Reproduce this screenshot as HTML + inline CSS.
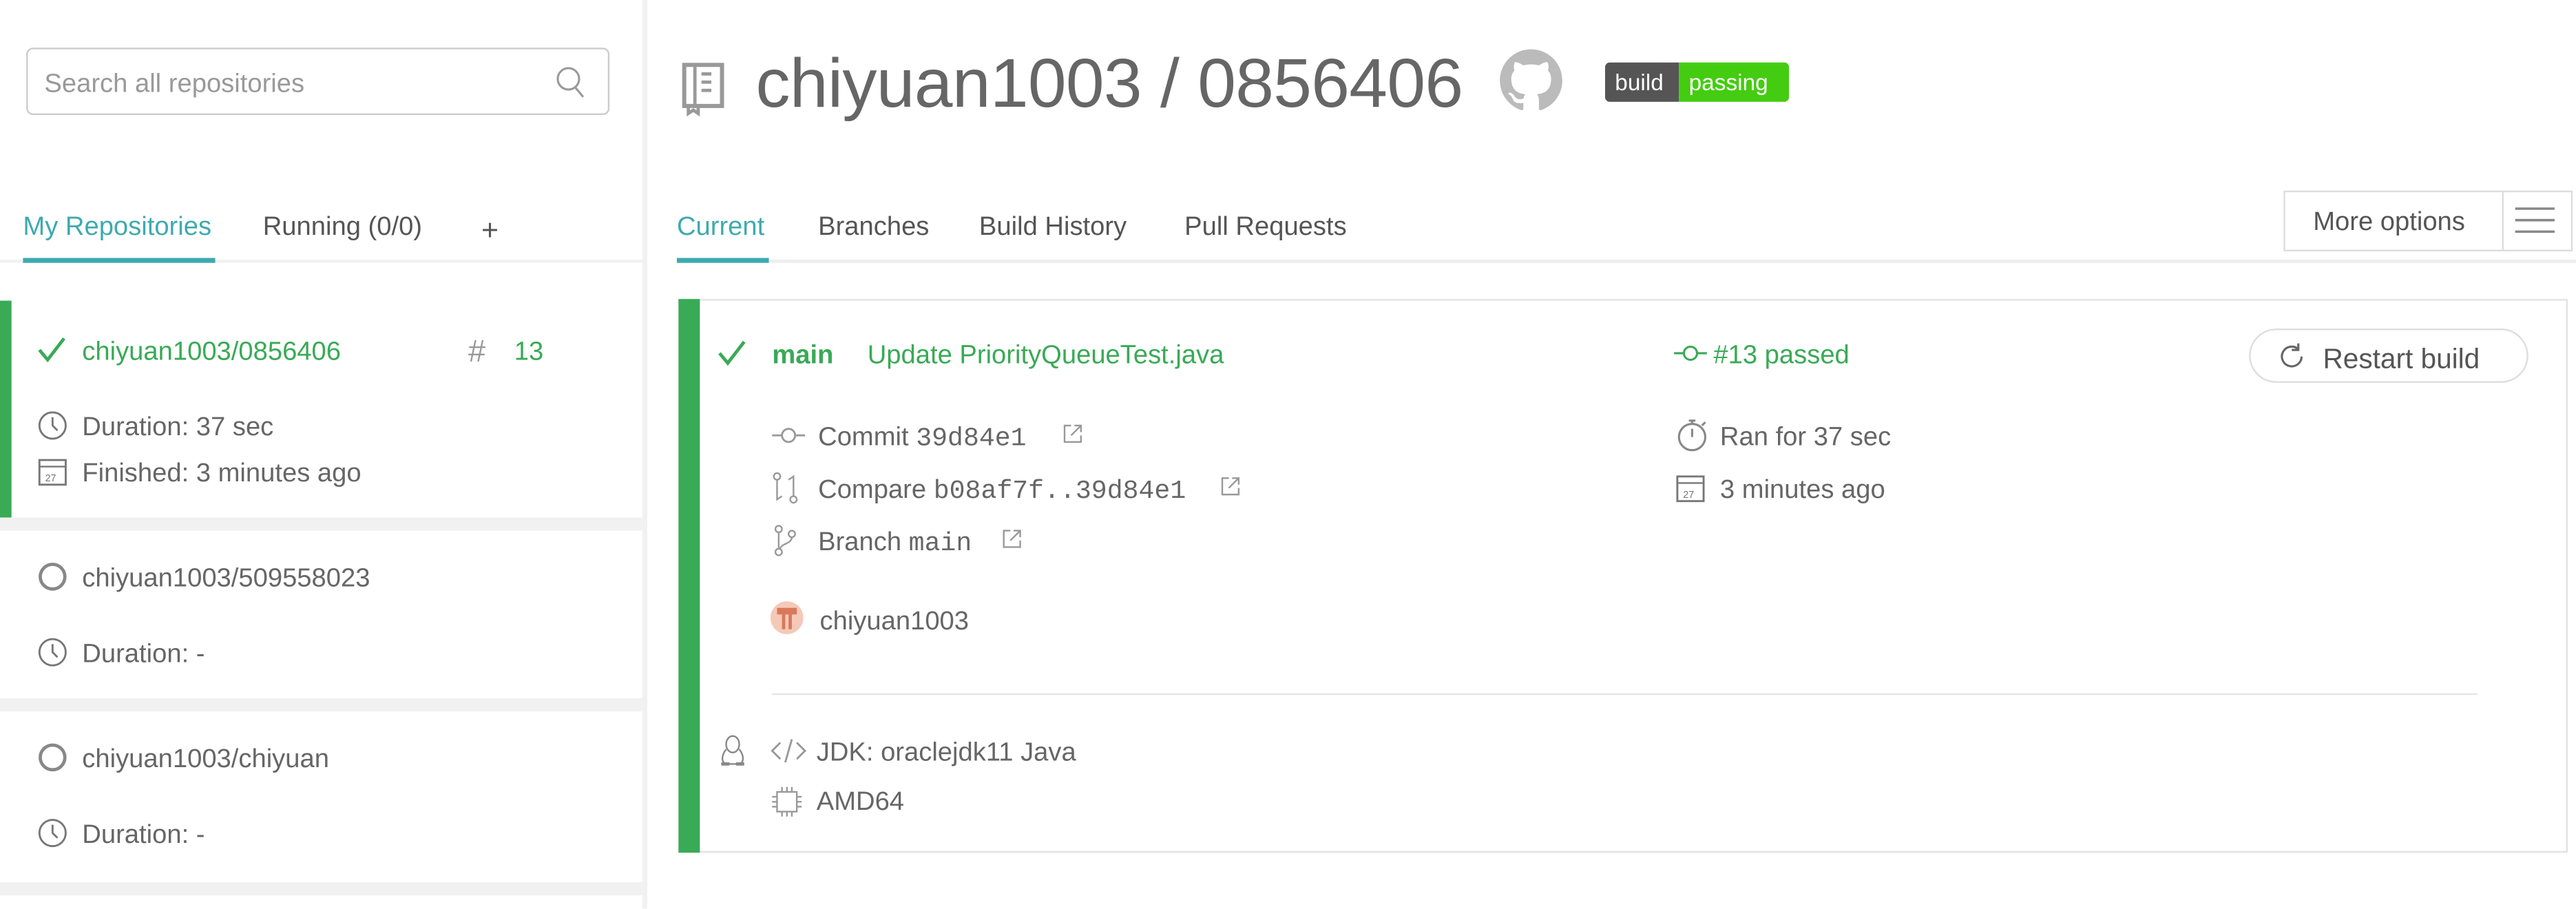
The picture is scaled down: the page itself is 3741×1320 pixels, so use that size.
<!DOCTYPE html>
<html><head><meta charset="utf-8"><style>
*{margin:0;padding:0;box-sizing:border-box}
html,body{width:3741px;height:1320px;overflow:hidden;background:#fff}
#w{position:absolute;left:0;top:0;width:1568px;height:553px;transform:scale(2.3858);transform-origin:0 0;font-family:"Liberation Sans",sans-serif;color:#666;font-size:16px}
.a{position:absolute;white-space:nowrap}
.x{margin-top:2px}
.g{color:#39aa56}
.t{color:#3eaaaf}
.m{font-family:"Liberation Mono",monospace;font-size:16px}
svg{position:absolute;overflow:visible}
.band{position:absolute;left:0;width:391px;background:#f1f1f1}
</style></head><body><div id="w">
<!-- sidebar -->
<div class="a" style="left:391px;top:0;width:3px;height:553px;background:#f1f1f1"></div>
<div class="a" style="left:16px;top:29px;width:355px;height:41px;border:1px solid #ccc;border-radius:4px"></div>
<div class="a x" style="left:27px;top:41px;color:#999">Search all repositories</div>
<svg style="left:338px;top:40px" width="20" height="20"><circle cx="8" cy="8" r="6.5" fill="none" stroke="#999" stroke-width="1.3"/><path d="M12 13l5 6" stroke="#999" stroke-width="1.3"/></svg>
<div class="a t x" style="left:14px;top:128px">My Repositories</div>
<div class="a x" style="left:160px;top:128px;color:#555">Running (0/0)</div>
<div class="a x" style="left:293px;top:128px;color:#555;font-size:18px">+</div>
<div class="a" style="left:0;top:158px;width:391px;height:2px;background:#f1f1f1"></div>
<div class="a" style="left:14px;top:157px;width:117px;height:3px;background:#3eaaaf"></div>

<div class="a" style="left:0;top:183px;width:7px;height:132px;background:#39aa56"></div>
<svg style="left:22px;top:204px" width="20" height="18"><path d="M2 9l5 6L17 2" fill="none" stroke="#39aa56" stroke-width="2"/></svg>
<div class="a g x" style="left:50px;top:204px">chiyuan1003/0856406</div>
<div class="a x" style="left:285px;top:202px;color:#999;font-size:19px">#</div>
<div class="a g x" style="left:313px;top:204px">13</div>
<svg style="left:23px;top:250px" width="18" height="18"><circle cx="9" cy="9" r="8" fill="none" stroke="#777" stroke-width="1.2"/><path d="M9 4v5l3 3" fill="none" stroke="#777" stroke-width="1.2"/></svg>
<div class="a x" style="left:50px;top:250px">Duration: 37 sec</div>
<svg style="left:23px;top:278px" width="18" height="18"><rect x="1" y="2" width="16" height="15" fill="none" stroke="#777" stroke-width="1.2"/><path d="M1 6h16" stroke="#777"/><text x="4.5" y="15" font-size="6" fill="#777" font-family="Liberation Sans">27</text></svg>
<div class="a x" style="left:50px;top:278px">Finished: 3 minutes ago</div>
<div class="band" style="top:315px;height:8px"></div>
<svg style="left:23px;top:342px" width="18" height="18"><circle cx="9" cy="9" r="7.5" fill="none" stroke="#888" stroke-width="2"/></svg>
<div class="a x" style="left:50px;top:342px">chiyuan1003/509558023</div>
<svg style="left:23px;top:388px" width="18" height="18"><circle cx="9" cy="9" r="8" fill="none" stroke="#777" stroke-width="1.2"/><path d="M9 4v5l3 3" fill="none" stroke="#777" stroke-width="1.2"/></svg>
<div class="a x" style="left:50px;top:388px">Duration: -</div>
<div class="band" style="top:425px;height:8px"></div>
<svg style="left:23px;top:452px" width="18" height="18"><circle cx="9" cy="9" r="7.5" fill="none" stroke="#888" stroke-width="2"/></svg>
<div class="a x" style="left:50px;top:452px">chiyuan1003/chiyuan</div>
<svg style="left:23px;top:498px" width="18" height="18"><circle cx="9" cy="9" r="8" fill="none" stroke="#777" stroke-width="1.2"/><path d="M9 4v5l3 3" fill="none" stroke="#777" stroke-width="1.2"/></svg>
<div class="a x" style="left:50px;top:498px">Duration: -</div>
<div class="band" style="top:537px;height:8px"></div>

<!-- header -->
<svg style="left:415px;top:38px" width="26" height="32"><rect x="1.5" y="1.5" width="23" height="25" fill="none" stroke="#999" stroke-width="2.5"/><path d="M8 1v25M12 7h6M12 12h6M12 17h6M4 27v4l3-2 3 2v-4" fill="none" stroke="#999" stroke-width="2"/></svg>
<div class="a" style="left:460px;top:27px;font-size:42px;color:#666;letter-spacing:-0.3px">chiyuan1003 / 0856406</div>
<svg style="left:913px;top:30px" width="38" height="38" viewBox="0 0 16 16"><path fill="#bbb" d="M8 0C3.580 0 0 3.58 0 8c0 3.54 2.29 6.53 5.47 7.59.4.07.55-.17.55-.38 0-.19-.01-.82-.01-1.49-2.010.37-2.53-.49-2.69-.94-.09-.23-.48-.94-.82-1.13-.28-.15-.68-.52-.01-.53.63-.01 1.08.58 1.23.82.72 1.21 1.87.87 2.33.66.07-.52.28-.87.51-1.070-1.78-.2-3.64-.89-3.64-3.95 0-.87.31-1.59.82-2.15-.08-.2-.36-1.02.08-2.12 0 0 .67-.21 2.2.82.64-.18 1.32-.27 2-.27.68 0 1.36.09 2 .27 1.53-1.04 2.2-.82 2.2-.82.44 1.1.16 1.92.08 2.12.51.56.82 1.27.82 2.15 0 3.07-1.87 3.75-3.65 3.95.29.25.54.73.54 1.48 0 1.07-.01 1.93-.01 2.2 0 .21.15.46.55.38A8.013 8.013 0 0016 8c0-4.42-3.58-8-8-8z"/></svg>
<div class="a" style="left:977px;top:38px;width:112px;height:24px;border-radius:3px;overflow:hidden;font-size:14px;color:#fff">
<div class="a" style="left:0;top:0;width:45px;height:24px;background:#555;padding:4px 0 0 6px">build</div>
<div class="a" style="left:45px;top:0;width:67px;height:24px;background:#4c1;padding:4px 0 0 6px">passing</div></div>

<div class="a t x" style="left:412px;top:128px">Current</div>
<div class="a x" style="left:498px;top:128px;color:#555">Branches</div>
<div class="a x" style="left:596px;top:128px;color:#555">Build History</div>
<div class="a x" style="left:721px;top:128px;color:#555">Pull Requests</div>
<div class="a" style="left:412px;top:158px;width:1156px;height:2px;background:#eee"></div>
<div class="a" style="left:412px;top:157px;width:56px;height:3px;background:#3eaaaf"></div>
<div class="a" style="left:1390px;top:116px;width:176px;height:37px;border:1px solid #ddd"></div>
<div class="a" style="left:1523px;top:116px;width:1px;height:37px;background:#ddd"></div>
<div class="a x" style="left:1408px;top:125px;color:#555">More options</div>
<svg style="left:1531px;top:126px" width="24" height="16"><path d="M0 1h24M0 8h24M0 15h24" stroke="#888" stroke-width="1.5"/></svg>

<!-- build card -->
<div class="a" style="left:413px;top:182px;width:1150px;height:337px;border:1px solid #e2e2e2"></div>
<div class="a" style="left:413px;top:182px;width:13px;height:337px;background:#39aa56"></div>
<svg style="left:436px;top:206px" width="20" height="18"><path d="M2 9l5 6L17 2" fill="none" stroke="#39aa56" stroke-width="2"/></svg>
<div class="a g x" style="left:470px;top:206px;font-weight:bold">main</div>
<div class="a g x" style="left:528px;top:206px">Update PriorityQueueTest.java</div>
<svg style="left:1019px;top:209px" width="20" height="12"><path d="M0 6h6M14 6h6" stroke="#39aa56" stroke-width="1.3"/><circle cx="10" cy="6" r="4" fill="none" stroke="#39aa56" stroke-width="1.3"/></svg>
<div class="a g x" style="left:1043px;top:206px">#13 passed</div>
<div class="a" style="left:1369px;top:200px;width:170px;height:33px;border:1px solid #ddd;border-radius:17px"></div>
<svg style="left:1385px;top:207px" width="20" height="20"><path d="M16 10a6 6 0 1 1-2-4.5" fill="none" stroke="#666" stroke-width="1.3"/><path d="M14 2v4h-4" fill="none" stroke="#666" stroke-width="1.3"/></svg>
<div class="a x" style="left:1414px;top:207px;font-size:17px;color:#555">Restart build</div>

<svg style="left:470px;top:259px" width="20" height="12"><path d="M0 6h6M14 6h6" stroke="#999" stroke-width="1.2"/><circle cx="10" cy="6" r="4" fill="none" stroke="#999" stroke-width="1.2"/></svg>
<div class="a x" style="left:498px;top:256px">Commit <span class="m">39d84e1</span></div>
<svg style="left:647px;top:258px" width="12" height="12"><path d="M5 1H1v10h10V7M7 1h4v4M11 1L5 7" fill="none" stroke="#999" stroke-width="1"/></svg>
<svg style="left:470px;top:287px" width="16" height="20"><circle cx="3" cy="3" r="2" fill="none" stroke="#999"/><circle cx="13" cy="17" r="2" fill="none" stroke="#999"/><path d="M3 5v12l3-2M13 15V3l-3 2" fill="none" stroke="#999"/></svg>
<div class="a x" style="left:498px;top:288px">Compare <span class="m">b08af7f..39d84e1</span></div>
<svg style="left:743px;top:290px" width="12" height="12"><path d="M5 1H1v10h10V7M7 1h4v4M11 1L5 7" fill="none" stroke="#999" stroke-width="1"/></svg>
<svg style="left:471px;top:319px" width="14" height="20"><circle cx="3" cy="17" r="2" fill="none" stroke="#999"/><circle cx="3" cy="3" r="2" fill="none" stroke="#999"/><circle cx="11" cy="6" r="2" fill="none" stroke="#999"/><path d="M3 5v10M11 8c0 4-7 4-7 7" fill="none" stroke="#999"/></svg>
<div class="a x" style="left:498px;top:320px">Branch <span class="m">main</span></div>
<svg style="left:610px;top:322px" width="12" height="12"><path d="M5 1H1v10h10V7M7 1h4v4M11 1L5 7" fill="none" stroke="#999" stroke-width="1"/></svg>
<svg style="left:469px;top:366px" width="20" height="20"><circle cx="10" cy="10" r="10" fill="#f4c9b8"/><path d="M4 4h12v4h-3v9h-2V8H9v9H7V8H4z" fill="#d9785a"/></svg>
<div class="a x" style="left:499px;top:368px">chiyuan1003</div>

<svg style="left:1019px;top:254px" width="22" height="22"><circle cx="11" cy="12" r="8" fill="none" stroke="#888" stroke-width="1.3"/><path d="M11 12V7M9 2h4M11 2v2M17 5l2-2" fill="none" stroke="#888" stroke-width="1.3"/></svg>
<div class="a x" style="left:1047px;top:256px">Ran for 37 sec</div>
<svg style="left:1020px;top:288px" width="18" height="18"><rect x="1" y="2" width="16" height="15" fill="none" stroke="#777" stroke-width="1.2"/><path d="M1 6h16" stroke="#777"/><text x="4.5" y="15" font-size="6" fill="#777" font-family="Liberation Sans">27</text></svg>
<div class="a x" style="left:1047px;top:288px">3 minutes ago</div>

<div class="a" style="left:470px;top:422px;width:1038px;height:1px;background:#e5e5e5"></div>
<svg style="left:438px;top:447px" width="16" height="20"><ellipse cx="8" cy="6" rx="4" ry="5" fill="none" stroke="#888"/><path d="M4 9c-3 4-3 8 0 9h8c3-1 3-5 0-9" fill="none" stroke="#888"/><path d="M1 18h5M10 18h5" stroke="#888" stroke-width="2"/></svg>
<svg style="left:470px;top:450px" width="20" height="14"><path d="M5 2L0 7l5 5M15 2l5 5-5 5M12 0L8 14" fill="none" stroke="#999" stroke-width="1.2"/></svg>
<div class="a x" style="left:497px;top:448px">JDK: oraclejdk11 Java</div>
<svg style="left:470px;top:479px" width="18" height="18"><rect x="3" y="3" width="12" height="12" fill="none" stroke="#999"/><path d="M6 0v3M9 0v3M12 0v3M6 15v3M9 15v3M12 15v3M0 6h3M0 9h3M0 12h3M15 6h3M15 9h3M15 12h3" stroke="#999"/></svg>
<div class="a x" style="left:497px;top:478px">AMD64</div>
</div></body></html>
